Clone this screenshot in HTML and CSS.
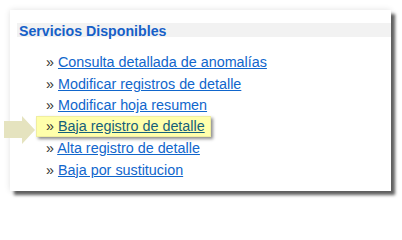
FILE: index.html
```html
<!DOCTYPE html>
<html lang="es">
<head>
<meta charset="utf-8">
<title>Servicios Disponibles</title>
<link rel="stylesheet" href="styles.css">
</head>
<body>
<div class="card">
  <div class="card-head"><h2 class="title">Servicios Disponibles</h2></div>
  <ul class="services">
    <li class="item">» <a href="#">Consulta detallada de anomalías</a></li>
    <li class="item">» <a href="#">Modificar registros de detalle</a></li>
    <li class="item">» <a href="#">Modificar hoja resumen</a></li>
    <li class="item item-marked">
      <svg class="pointer" width="32" height="28" viewBox="0 0 32 28" aria-hidden="true"><polygon points="0,5 18,5 18,0 31,14 18,28 18,22 0,22" fill="#e5e3bf"/></svg>
      <span class="highlight">» <a href="#">Baja registro de detalle</a></span>
    </li>
    <li class="item">» <a href="#">Alta registro de detalle</a></li>
    <li class="item">» <a href="#">Baja por sustitucion</a></li>
  </ul>
</div>
</body>
</html>
```
FILE: styles.css
```css
html, body {
  margin: 0;
  padding: 0;
  background: #ffffff;
}
body {
  font-family: "Liberation Sans", Arial, sans-serif;
  width: 402px;
  height: 203px;
  overflow: hidden;
}
.card {
  margin: 10px 0 0 10px;
  width: 381px;
  height: 181px;
  box-sizing: border-box;
  background: #ffffff;
  box-shadow: 4px 4px 3px #5f5f5f, 0 0 6px rgba(0, 0, 0, 0.12);
  padding-top: 13px;
}
.card-head {
  margin-left: 7px;
  height: 14px;
  background: #f2f2f2;
  display: flex;
  align-items: center;
}
.title {
  margin: 0 0 0 2px;
  font-size: 14.2px;
  font-weight: bold;
  color: #1660c8;
  line-height: 14px;
  position: relative;
  top: 1px;
}
.services {
  list-style: none;
  margin: 0;
  padding: 15px 0 0 36px;
}
.item {
  font-size: 14.35px;
  line-height: 21.6px;
  color: #333333;
  position: relative;
}
.item a {
  color: #1166cc;
  text-decoration: underline;
}
.highlight {
  display: inline-block;
  line-height: 17px;
  margin-left: -9px;
  padding: 1px 5px 1px 9px;
  background: #ffffab;
  border: 1px solid #f0eea0;
  box-shadow: 2px 2px 3px rgba(0, 0, 0, 0.45);
  position: relative;
  top: -1px;
  left: -1px;
}
.highlight a {
  color: #15607a;
}
.pointer {
  position: absolute;
  left: -42px;
  top: -1px;
}
```
